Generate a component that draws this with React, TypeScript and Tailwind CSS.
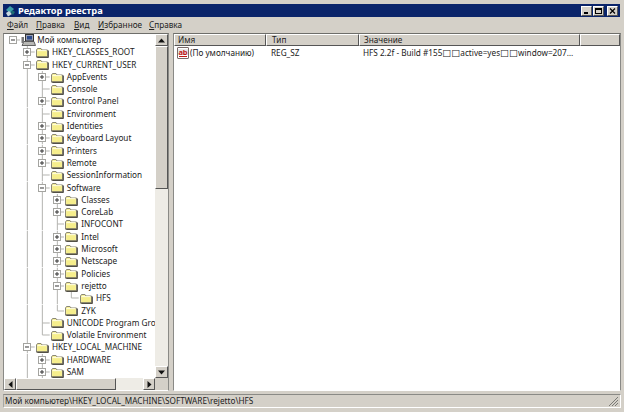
import { ReactNode } from "react";

type Row = { depth: number; label: string; icon?: "plus" | "minus"; end?: boolean };

const rows: Row[] = [
  { depth: 1, label: "HKEY_CLASSES_ROOT", icon: "plus" },
  { depth: 1, label: "HKEY_CURRENT_USER", icon: "minus" },
  { depth: 2, label: "AppEvents", icon: "plus" },
  { depth: 2, label: "Console" },
  { depth: 2, label: "Control Panel", icon: "plus" },
  { depth: 2, label: "Environment" },
  { depth: 2, label: "Identities", icon: "plus" },
  { depth: 2, label: "Keyboard Layout", icon: "plus" },
  { depth: 2, label: "Printers", icon: "plus" },
  { depth: 2, label: "Remote", icon: "plus" },
  { depth: 2, label: "SessionInformation" },
  { depth: 2, label: "Software", icon: "minus" },
  { depth: 3, label: "Classes", icon: "plus" },
  { depth: 3, label: "CoreLab", icon: "plus" },
  { depth: 3, label: "INFOCONT" },
  { depth: 3, label: "Intel", icon: "plus" },
  { depth: 3, label: "Microsoft", icon: "plus" },
  { depth: 3, label: "Netscape", icon: "plus" },
  { depth: 3, label: "Policies", icon: "plus" },
  { depth: 3, label: "rejetto", icon: "minus" },
  { depth: 4, label: "HFS", end: true },
  { depth: 3, label: "ZYK", end: true },
  { depth: 2, label: "UNICODE Program Group" },
  { depth: 2, label: "Volatile Environment", end: true },
  { depth: 1, label: "HKEY_LOCAL_MACHINE", icon: "minus" },
  { depth: 2, label: "HARDWARE", icon: "plus" },
  { depth: 2, label: "SAM", icon: "plus" },
  { depth: 2, label: "SECURITY" },
];

const Guide = () => (
  <svg width="14.7" height="12.3" viewBox="0 0 14.7 12.3" className="shrink-0">
    <line x1="7.35" y1="0" x2="7.35" y2="12.3" stroke="#b4b4b0" />
  </svg>
);

function Connector({ icon, end, root }: { icon?: "plus" | "minus"; end?: boolean; root?: boolean }) {
  return (
    <svg width="14.7" height="12.3" viewBox="0 0 14.7 12.3" className="shrink-0">
      {!root && <line x1="7.35" y1="0" x2="7.35" y2={end ? 6 : 12.3} stroke="#b4b4b0" />}
      <line x1="7.35" y1="6" x2="14.7" y2="6" stroke="#b4b4b0" />
      {icon && (
        <>
          <rect x="3.5" y="2.5" width="7" height="7" fill="#fff" stroke="#a4a4a0" />
          <line x1="5" y1="6" x2="9" y2="6" stroke="#333" />
          {icon === "plus" && <line x1="7" y1="4" x2="7" y2="8" stroke="#333" />}
        </>
      )}
    </svg>
  );
}

const Folder = () => (
  <svg width="14" height="11" viewBox="0 0 14 11" className="shrink-0">
    <path d="M1.5 3 L2.5 1.5 H6 L7 3 H12.5 V10 H1.5 Z" fill="#f8f29c" stroke="#8a8776" />
    <path d="M2.5 3.6 H11.5" stroke="#fffde0" />
    <path d="M2.6 4.5 H11.5 V9 H2.6 Z" fill="#f6ee8c" />
    <path d="M13.3 3.5 V10.6 H2.5" fill="none" stroke="#3c3a32" />
    <path d="M1.5 10 H12.5" stroke="#5c5a50" />
  </svg>
);

const Computer = () => (
  <svg width="15" height="12" viewBox="0 0 15 12" className="shrink-0 ml-[1px]">
    <rect x="4.5" y="0.5" width="8" height="6.5" fill="#9aa0b4" stroke="#333" />
    <rect x="6" y="2" width="5" height="3.5" fill="#2c4a8c" />
    <path d="M1 11.5 L3 7.5 H13 L14.5 11.5 Z" fill="#b8b8b4" stroke="#444" strokeWidth="0.8" />
    <rect x="0.5" y="3" width="2.5" height="6" fill="#777" />
  </svg>
);

const RegIcon = () => (
  <div className="w-[12px] h-[12px] shrink-0 bg-white border border-[#7a6a6a] rounded-[1px] flex flex-col">
    <span className="h-[6px] mt-[0.5px] bg-[#e8e8e8] text-[#c01818] text-[7.5px] leading-[6px] font-bold text-center">ab</span>
    <span className="mx-[1px] mt-[1px] h-px bg-[#c01818]" />
  </div>
);

function Btn({ children, className = "" }: { children?: ReactNode; className?: string }) {
  return (
    <div
      className={`bg-[#d4d0c8] border border-t-white border-l-white border-r-[#555] border-b-[#555] flex items-center justify-center shrink-0 ${className}`}
    >
      {children}
    </div>
  );
}

const Arrow = ({ d }: { d: string }) => (
  <svg width="7" height="7" viewBox="0 0 7 7">
    <path d={d} fill="#111" />
  </svg>
);

function Menu({ first, rest, className }: { first: string; rest: string; className: string }) {
  return (
    <span className={className}>
      <span className="underline">{first}</span>
      {rest}
    </span>
  );
}

const Box = () => <span className="font-['DejaVu_Sans'] text-[9.5px] leading-none">□</span>;

export default function App() {
  return (
    <div className="w-[624px] h-[412px] bg-[#d4d0c8] flex flex-col px-[3px] pt-[4px] pb-[4px] overflow-hidden text-[8.2px] text-[#222] font-['Noto_Sans','Liberation_Sans',sans-serif]">
      {/* title bar */}
      <div className="h-[13px] mr-[1px] bg-[#0a246a] flex items-center shrink-0">
        <svg width="12" height="12" viewBox="0 0 12 12" className="ml-[1px]">
          <path d="M2 5 L6 1 L10 4 L6 8 Z" fill="#3fa0a8" />
          <path d="M2 8 L5 6 L8 9 L4 11.5 Z" fill="#c8d8e0" />
          <path d="M8 5 L11 7 L9 10 L7 8 Z" fill="#1c6c74" />
        </svg>
        <span className="ml-[2px] text-white font-bold text-[9.3px] leading-none">Редактор реестра</span>
        <div className="ml-auto flex items-center pr-[2px]">
          <Btn className="w-[11px] h-[10px] items-end">
            <span className="w-[4px] h-[1.5px] mb-[1px] mr-[1px] bg-black" />
          </Btn>
          <Btn className="w-[11px] h-[10px] ml-[1px]">
            <span className="w-[7px] h-[6px] border border-black border-t-2" />
          </Btn>
          <Btn className="w-[11px] h-[10px] ml-[3px]">
            <svg width="7" height="6" viewBox="0 0 7 6">
              <path d="M1 0.5 L6 5.5 M6 0.5 L1 5.5" stroke="#000" strokeWidth="1.2" />
            </svg>
          </Btn>
        </div>
      </div>

      {/* menu */}
      <div className="h-[16px] flex items-center shrink-0">
        <Menu first="Ф" rest="айл" className="ml-[4px] w-[29px]" />
        <Menu first="П" rest="равка" className="w-[38px]" />
        <Menu first="В" rest="ид" className="w-[24px]" />
        <Menu first="И" rest="збранное" className="w-[51px]" />
        <Menu first="С" rest="правка" className="" />
      </div>

      {/* panes */}
      <div className="flex flex-1 min-h-0 gap-[4px]">
        {/* tree pane */}
        <div className="w-[166px] shrink-0 flex flex-col border border-t-[#6e6e6a] border-l-[#8a8a86] border-r-[#8a8a86] border-b-white bg-white">
          <div className="flex flex-1 min-h-0">
            <div className="flex-1 min-w-0 overflow-hidden pl-[1.6px] whitespace-nowrap">
              <div className="flex items-center h-[12.3px]">
                <Connector icon="minus" root />
                <Computer />
                <span className="ml-[1px]">Мой компьютер</span>
              </div>
              {rows.map((row) => (
                <div key={row.label} className="flex items-center h-[12.3px]">
                  <span className="w-[14.7px] shrink-0" />
                  {Array.from({ length: row.depth - 1 }, (_, i) => (
                    <Guide key={i} />
                  ))}
                  <Connector icon={row.icon} end={row.end} />
                  <Folder />
                  <span className="ml-[3px]">{row.label}</span>
                </div>
              ))}
            </div>
            <div className="w-[13px] shrink-0 flex flex-col bg-[#eeece6]">
              <Btn className="h-[12px]">
                <Arrow d="M3.5 1.5 L7 5.5 H0 Z" />
              </Btn>
              <Btn className="h-[143px]" />
              <div className="flex-1" />
              <Btn className="h-[12px]">
                <Arrow d="M0 1.5 H7 L3.5 5.5 Z" />
              </Btn>
            </div>
          </div>
          <div className="h-[12px] shrink-0 flex">
            <div className="flex flex-1 bg-[#eeece6]">
              <Btn className="w-[12px]">
                <Arrow d="M1.5 3.5 L5.5 0 V7 Z" />
              </Btn>
              <Btn className="w-[100px]" />
              <div className="flex-1" />
              <Btn className="w-[12px]">
                <Arrow d="M1.5 0 L5.5 3.5 L1.5 7 Z" />
              </Btn>
            </div>
            <div className="w-[13px] bg-[#d4d0c8]" />
          </div>
        </div>

        {/* list pane */}
        <div className="flex-1 min-w-0 border border-t-[#6e6e6a] border-l-[#8a8a86] border-r-[#8a8a86] border-b-white bg-white flex flex-col">
          <div className="h-[12px] shrink-0 flex">
            <Btn className="w-[92px] justify-start pl-[3px]">Имя</Btn>
            <Btn className="w-[93px] justify-start pl-[5px]">Тип</Btn>
            <Btn className="w-[221px] justify-start pl-[4px]">Значение</Btn>
            <Btn className="flex-1" />
          </div>
          <div className="flex items-center h-[13px] mt-[1px] whitespace-nowrap">
            <span className="w-[92px] flex items-center pl-[3px] shrink-0">
              <RegIcon />
              <span className="ml-[1px]">(По умолчанию)</span>
            </span>
            <span className="w-[93px] pl-[5px] shrink-0">REG_SZ</span>
            <span className="w-[216px] pl-[4px] shrink-0 overflow-hidden">
              HFS 2.2f - Build #155
              <Box />
              <Box />
              active=yes
              <Box />
              <Box />
              window=207…
            </span>
          </div>
        </div>
      </div>

      {/* status bar */}
      <div className="h-[14px] mt-[3px] shrink-0 flex items-center border border-t-[#8a8a86] border-l-[#a8a8a4] border-r-white border-b-white whitespace-nowrap overflow-hidden">
        <span className="pl-[1px]">Мой компьютер\HKEY_LOCAL_MACHINE\SOFTWARE\rejetto\HFS</span>
        <svg width="11" height="11" viewBox="0 0 11 11" className="ml-auto mr-[1px] self-end">
          <path d="M10 1 L1 10 M10 4 L4 10 M10 7 L7 10" stroke="#7a7a76" strokeWidth="1" />
        </svg>
      </div>
    </div>
  );
}
